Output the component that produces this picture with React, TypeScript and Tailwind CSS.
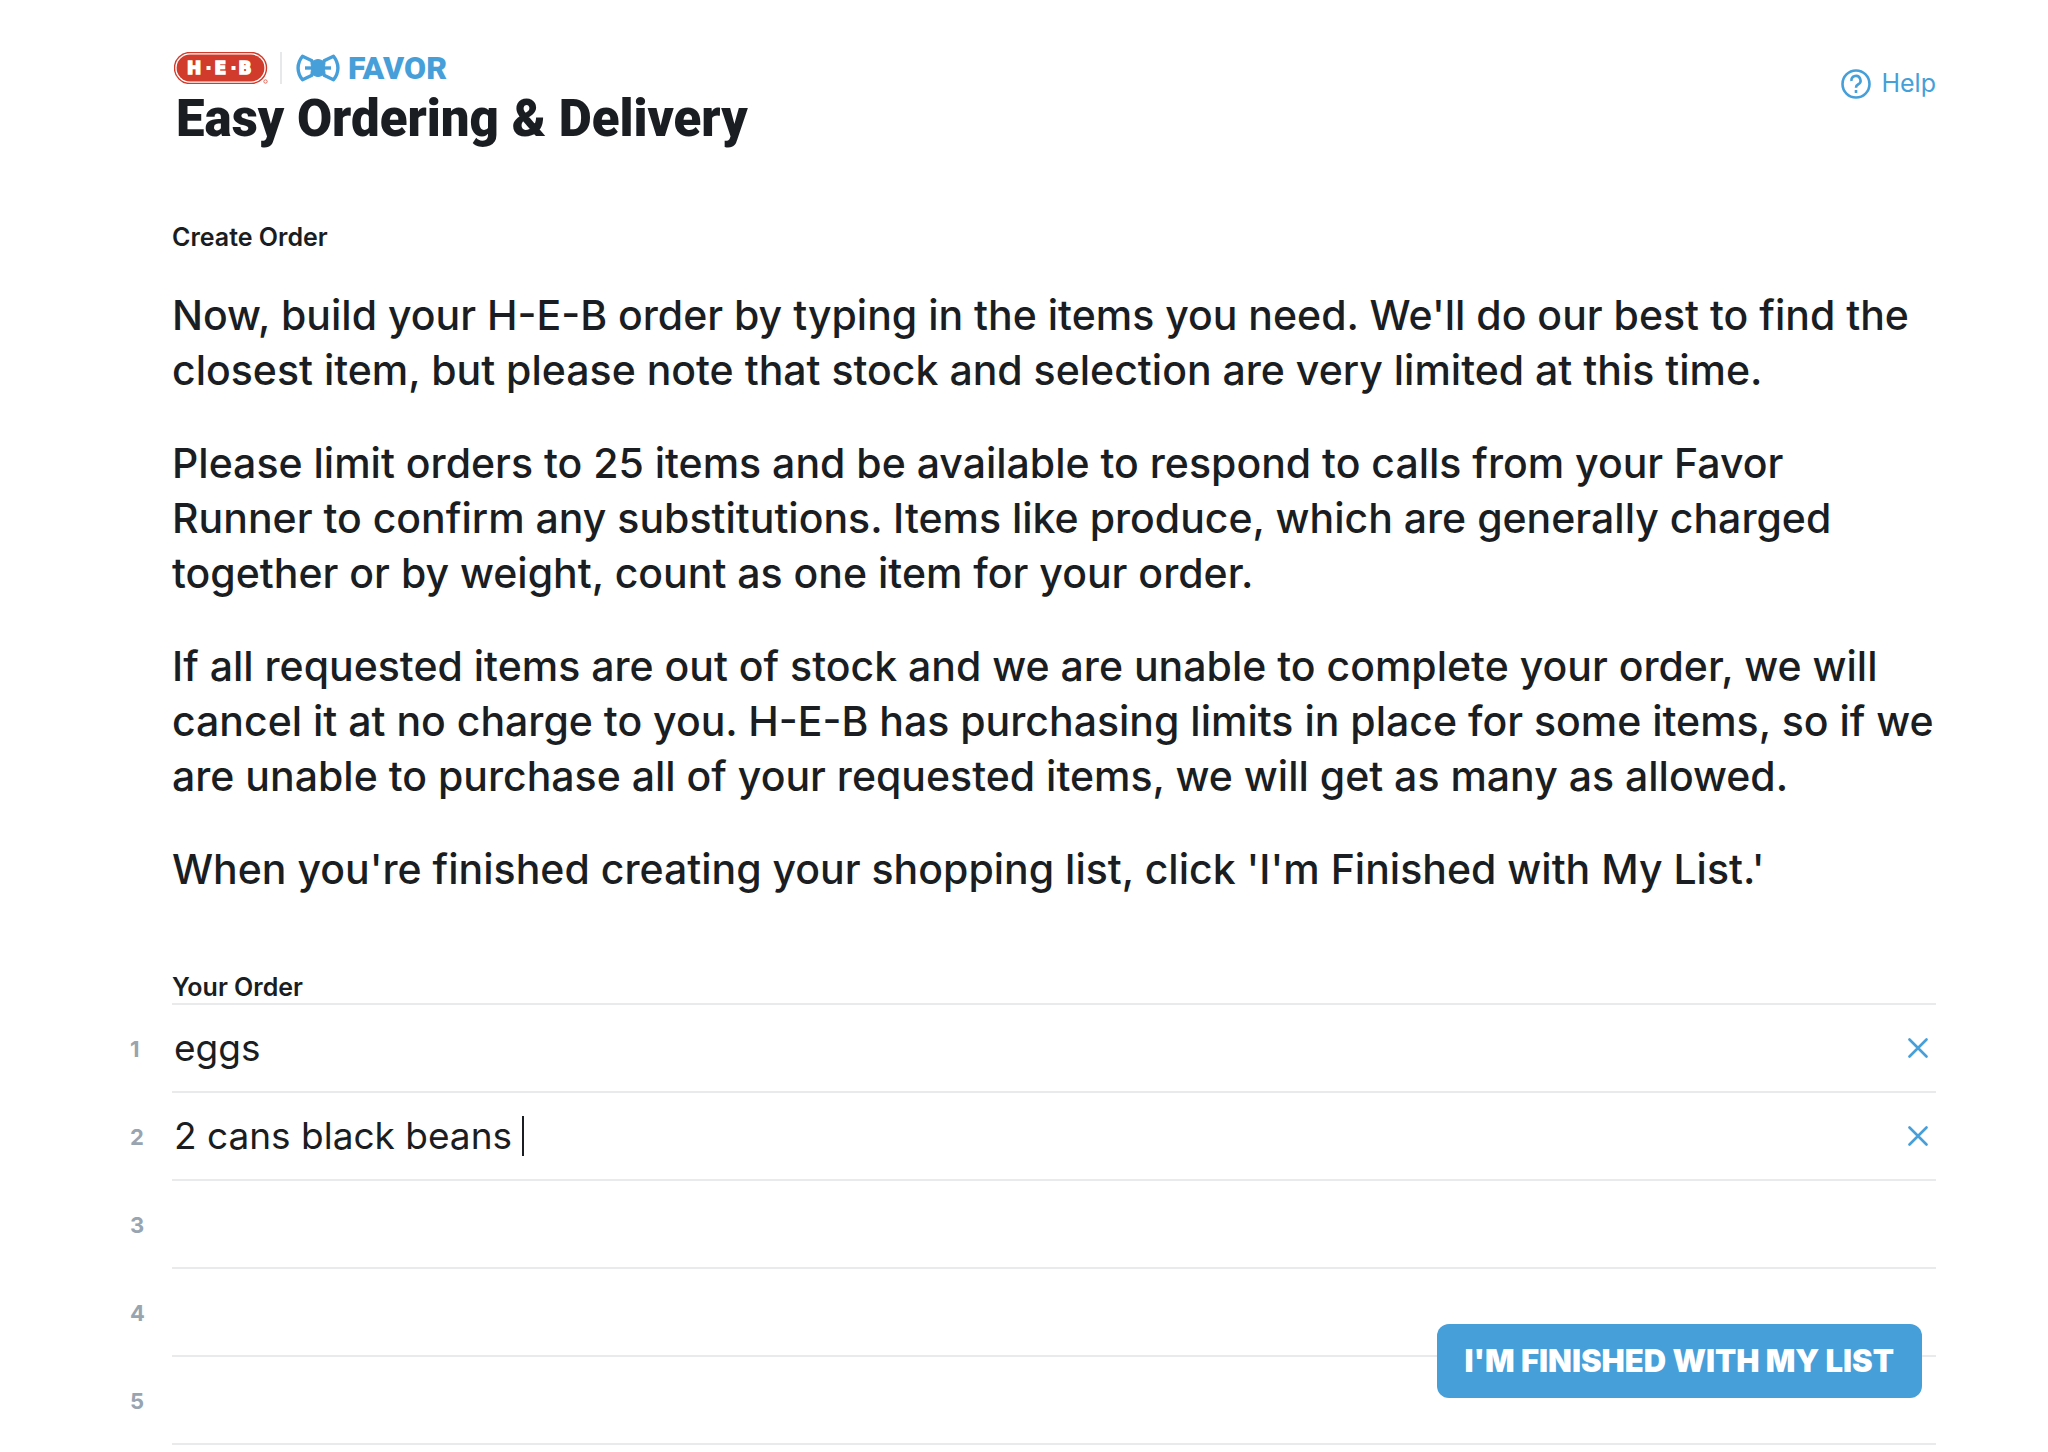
import { useState } from "react";

const paragraphs: string[][] = [
  [
    "Now, build your H-E-B order by typing in the items you need. We'll do our best to find the",
    "closest item, but please note that stock and selection are very limited at this time.",
  ],
  [
    "Please limit orders to 25 items and be available to respond to calls from your Favor",
    "Runner to confirm any substitutions. Items like produce, which are generally charged",
    "together or by weight, count as one item for your order.",
  ],
  [
    "If all requested items are out of stock and we are unable to complete your order, we will",
    "cancel it at no charge to you. H-E-B has purchasing limits in place for some items, so if we",
    "are unable to purchase all of your requested items, we will get as many as allowed.",
  ],
  ["When you're finished creating your shopping list, click 'I'm Finished with My List.'"],
];

function HebLogo() {
  return (
    <svg className="h-8 w-24" viewBox="0 0 96 32" role="img" aria-label="H-E-B">
      <rect x="0.5" y="0.5" width="92" height="31" rx="15.5" fill="#fff" stroke="#d13b2b" strokeWidth="1.4" />
      <rect x="2.6" y="2.6" width="87.8" height="26.8" rx="13.4" fill="#d13b2b" />
      <g fill="#fff" stroke="#fff" strokeWidth="1.6" fontFamily="DejaVu Sans, sans-serif" fontWeight="700" fontSize="17">
        <text x="13" y="22">H</text>
        <text x="40.5" y="22">E</text>
        <text x="64.500" y="22">B</text>
      </g>
      <rect x="32.5" y="14" width="4" height="4" fill="#fff" />
      <rect x="57.5" y="14" width="4" height="4" fill="#fff" />
      <circle cx="91.5" cy="29.5" r="1.7" fill="#fff" stroke="#d13b2b" strokeWidth="0.7" />
    </svg>
  );
}

function FavorBow() {
  return (
    <svg className="h-7 w-11" viewBox="0 0 44 28" fill="none" stroke="#469fd9" strokeLinejoin="round" aria-hidden="true">
      <path strokeWidth="3.4" d="M16.5 7 6.5 2.2C0.6 9.5 0.6 18.5 6.5 25.8L16.5 21" />
      <path strokeWidth="3.4" d="M27.5 7 37.5 2.2C43.4 9.5 43.4 18.5 37.5 25.8L27.5 21" />
      <path strokeWidth="3.4" d="M9 14H35" />
      <path fill="#469fd9" strokeWidth="1" d="M15 6Q18 7.5 19.5 6Q22 5 24.5 6Q26 7.5 29 6V9.5Q27.5 14 29 18.5V22Q26 20.5 24.5 22Q22 23 19.5 22Q18 20.5 15 22V18.5Q16.5 14 15 9.5Z" />
    </svg>
  );
}

type OrderRowProps = {
  index: number;
  value: string;
  active: boolean;
  onFocus: () => void;
  onChange: (value: string) => void;
};

function OrderRow({ index, value, active, onFocus, onChange }: OrderRowProps) {
  const id = `item-${index}`;
  return (
    <li className="-ml-12 flex h-22 items-center">
      <label htmlFor={id} className="w-12 pl-1.5 text-[22px] font-bold text-[#98a4b0]">
        {index}
      </label>
      <div className="flex h-full flex-1 items-center border-b-2 border-[#e9eaeb]">
        <div className="relative h-full min-w-0 flex-1 text-[37px]">
          <input
            id={id}
            type="text"
            value={value}
            onFocus={onFocus}
            onChange={(e) => onChange(e.target.value)}
            className="h-full w-full bg-transparent pb-0.5 pl-0.5 caret-transparent outline-none"
          />
          {/* Tall thin caret after the typed text */}
          {active && (
            <span aria-hidden="true" className="pointer-events-none absolute inset-y-0 left-0 flex items-center pl-0.5 whitespace-pre">
              <span className="invisible">{value}</span>
              <span className="h-10 w-0.5 bg-[#1a1d21]" />
            </span>
          )}
        </div>
        {value && (
          <button type="button" aria-label={`Remove item ${index}`} onClick={() => onChange("")} className="mr-1.5 p-0.5 text-[#469fd9]">
            <svg className="size-5" viewBox="0 0 20 20" stroke="currentColor" strokeWidth="2.6" strokeLinecap="round">
              <path d="M1.5 1.5 18.5 18.5M18.5 1.5 1.5 18.5" />
            </svg>
          </button>
        )}
      </div>
    </li>
  );
}

export default function App() {
  const [items, setItems] = useState<string[]>(["eggs", "2 cans black beans ", "", "", ""]);
  const [activeIndex, setActiveIndex] = useState(1);

  const updateItem = (index: number, value: string) => {
    setItems(items.map((item, i) => (i === index ? value : item)));
  };

  return (
    <div className="min-h-screen bg-white pt-[52px] pr-28 pl-[172px] font-[Inter,sans-serif] text-[#1a1d21]">
      <header className="flex items-start justify-between">
        <div>
          <div className="flex items-center pl-0.5">
            <HebLogo />
            <span className="ml-2.5 h-8 w-0.5 bg-[#e6e8ea]" />
            <span className="ml-3.5 flex items-center gap-2">
              <FavorBow />
              <span className="font-[Roboto,sans-serif] text-[32px] leading-8 font-black text-[#469fd9]">FAVOR</span>
            </span>
          </div>
          <h1 className="pt-[5px] pl-1 font-[Roboto,sans-serif] text-[51px] leading-[60px] font-black">Easy Ordering &amp; Delivery</h1>
        </div>
        <a href="#help" className="flex items-center gap-2.5 pt-[13px] text-[25px] text-[#469fd9]">
          <svg className="size-[30px]" viewBox="0 0 30 30" fill="none" stroke="currentColor" strokeWidth="2.6" aria-hidden="true">
            <circle cx="15" cy="15" r="13.5" />
            <path d="M10.5 12A4.5 4.5 0 1 1 17 15.5Q15 16.5 15 18.8" />
            <path d="M15 21V24" />
          </svg>
          Help
        </a>
      </header>

      <main>
        <h2 className="mt-18 text-[25px] leading-8 font-semibold">Create Order</h2>
        <div className="mt-[35px] flex flex-col gap-[38px] text-[41px] leading-[55px] font-medium">
          {paragraphs.map((lines, i) => (
            <p key={i}>
              {lines.map((line) => (
                <span key={line} className="block whitespace-nowrap">{line}</span>
              ))}
            </p>
          ))}
        </div>

        <h2 className="mt-[74px] text-[25px] leading-8 font-semibold">Your Order</h2>
        <ol className="border-t-2 border-[#e9eaeb]">
          {items.map((item, i) => (
            <OrderRow
              key={i}
              index={i + 1}
              value={item}
              active={activeIndex === i}
              onFocus={() => setActiveIndex(i)}
              onChange={(value) => updateItem(i, value)}
            />
          ))}
        </ol>
      </main>

      <button
        type="button"
        className="fixed right-[126px] bottom-[54px] rounded-xl bg-[#469fd9] px-7 py-5 text-[31px] leading-[34px] font-black text-white"
      >
        I'M FINISHED WITH MY LIST
      </button>
    </div>
  );
}
